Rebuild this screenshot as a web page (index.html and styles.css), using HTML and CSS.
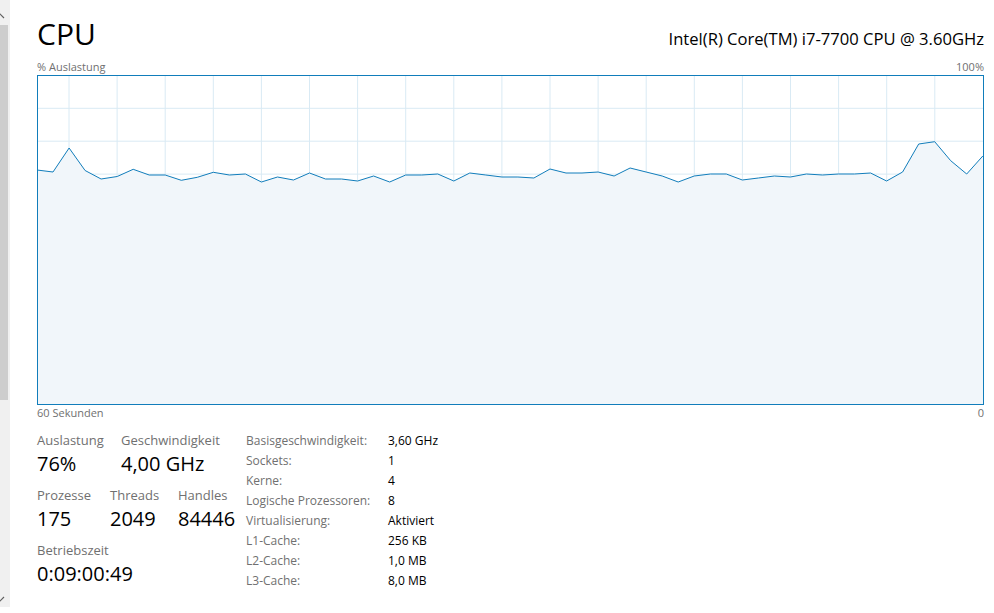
FILE: index.html
```html
<!DOCTYPE html>
<html lang="de">
  <head>
    <meta charset="utf-8">
    <title>CPU</title>
    <link rel="stylesheet" href="styles.css">
  </head>
  <body>
    <div class="scrollbar">
      <div class="sb-arrow">
        <svg width="10" height="25" viewBox="0 0 10 25"><polyline points="-4,18 0,14 4,18" fill="none" stroke="#606060" stroke-width="1.2"/></svg>
      </div>
      <div class="sb-thumb"></div>
      <div class="sb-rest"></div>
      <div class="sb-arrow sb-arrow-down">
        <svg width="10" height="12" viewBox="0 0 10 12"><polyline points="-4,2 0,6 4,2" fill="none" stroke="#606060" stroke-width="1.2"/></svg>
      </div>
    </div>

    <div class="main">
      <div class="head">
        <div class="title">CPU</div>
        <div class="model">Intel(R) Core(TM) i7-7700 CPU @ 3.60GHz</div>
      </div>

      <div class="axis axis-top">
        <span>% Auslastung</span>
        <span>100%</span>
      </div>

      <div class="chart">
        <svg viewBox="0 0 945 328" preserveAspectRatio="none">
          <g class="grid">
            <line x1="31" y1="0" x2="31" y2="328"/>
            <line x1="79.1" y1="0" x2="79.1" y2="328"/>
            <line x1="127.2" y1="0" x2="127.2" y2="328"/>
            <line x1="175.3" y1="0" x2="175.3" y2="328"/>
            <line x1="223.4" y1="0" x2="223.4" y2="328"/>
            <line x1="271.5" y1="0" x2="271.5" y2="328"/>
            <line x1="319.6" y1="0" x2="319.6" y2="328"/>
            <line x1="367.7" y1="0" x2="367.7" y2="328"/>
            <line x1="415.8" y1="0" x2="415.8" y2="328"/>
            <line x1="463.9" y1="0" x2="463.9" y2="328"/>
            <line x1="512" y1="0" x2="512" y2="328"/>
            <line x1="560.1" y1="0" x2="560.1" y2="328"/>
            <line x1="608.2" y1="0" x2="608.2" y2="328"/>
            <line x1="656.3" y1="0" x2="656.3" y2="328"/>
            <line x1="704.4" y1="0" x2="704.4" y2="328"/>
            <line x1="752.5" y1="0" x2="752.5" y2="328"/>
            <line x1="800.6" y1="0" x2="800.6" y2="328"/>
            <line x1="848.7" y1="0" x2="848.7" y2="328"/>
            <line x1="896.8" y1="0" x2="896.8" y2="328"/>
            <line x1="0" y1="32.3" x2="945" y2="32.3"/>
            <line x1="0" y1="65.2" x2="945" y2="65.2"/>
            <line x1="0" y1="98.1" x2="945" y2="98.1"/>
            <line x1="0" y1="131" x2="945" y2="131"/>
            <line x1="0" y1="163.9" x2="945" y2="163.9"/>
            <line x1="0" y1="196.8" x2="945" y2="196.8"/>
            <line x1="0" y1="229.7" x2="945" y2="229.7"/>
            <line x1="0" y1="262.6" x2="945" y2="262.6"/>
            <line x1="0" y1="295.5" x2="945" y2="295.5"/>
          </g>
          <polygon class="area" points="-1,94 15,96 31.1,72 47.1,94.5 63.1,103 79.2,100.5 95.2,93.3 111.2,99 127.2,99 143.3,104.3 159.3,101.3 175.3,96.3 191.4,99 207.4,98 223.4,106 239.5,101 255.5,104 271.5,97 287.5,103 303.6,103 319.6,105 335.6,100 351.7,106 367.7,99 383.7,99 399.8,98 415.8,105 431.8,97 447.8,99 463.9,101 479.9,101 495.9,102 512,93 528,97 544,97 560.1,96 576.1,100 592.1,92 608.1,96 624.2,100 640.2,106 656.2,100 672.3,98 688.3,98 704.3,104 720.4,102 736.4,100 752.4,101 768.4,98 784.5,99 800.5,98 816.5,98 832.6,97 848.6,105 864.6,96 880.7,68 896.7,65.7 912.7,84.7 928.7,98 944.8,80 945,328 -1,328"/>
          <polyline class="line" points="-1,94 15,96 31.1,72 47.1,94.5 63.1,103 79.2,100.5 95.2,93.3 111.2,99 127.2,99 143.3,104.3 159.3,101.3 175.3,96.3 191.4,99 207.4,98 223.4,106 239.5,101 255.5,104 271.5,97 287.5,103 303.6,103 319.6,105 335.6,100 351.7,106 367.7,99 383.7,99 399.8,98 415.8,105 431.8,97 447.8,99 463.9,101 479.9,101 495.9,102 512,93 528,97 544,97 560.1,96 576.1,100 592.1,92 608.1,96 624.2,100 640.2,106 656.2,100 672.3,98 688.3,98 704.3,104 720.4,102 736.4,100 752.4,101 768.4,98 784.5,99 800.5,98 816.5,98 832.6,97 848.6,105 864.6,96 880.7,68 896.7,65.7 912.7,84.7 928.7,98 944.8,80"/>
        </svg>
      </div>

      <div class="axis axis-bottom">
        <span>60 Sekunden</span>
        <span>0</span>
      </div>

      <div class="stats">
        <div class="stats-left">
          <div class="stat-row">
            <div class="stat stat-util">
              <div class="stat-label">Auslastung</div>
              <div class="stat-value">76%</div>
            </div>
            <div class="stat">
              <div class="stat-label">Geschwindigkeit</div>
              <div class="stat-value">4,00 GHz</div>
            </div>
          </div>
          <div class="stat-row">
            <div class="stat stat-proc">
              <div class="stat-label">Prozesse</div>
              <div class="stat-value">175</div>
            </div>
            <div class="stat stat-threads">
              <div class="stat-label">Threads</div>
              <div class="stat-value">2049</div>
            </div>
            <div class="stat">
              <div class="stat-label">Handles</div>
              <div class="stat-value">84446</div>
            </div>
          </div>
          <div class="stat-row">
            <div class="stat">
              <div class="stat-label">Betriebszeit</div>
              <div class="stat-value">0:09:00:49</div>
            </div>
          </div>
        </div>

        <div class="props">
          <div class="prop-label">Basisgeschwindigkeit:</div><div class="prop-value">3,60 GHz</div>
          <div class="prop-label">Sockets:</div><div class="prop-value">1</div>
          <div class="prop-label">Kerne:</div><div class="prop-value">4</div>
          <div class="prop-label">Logische Prozessoren:</div><div class="prop-value">8</div>
          <div class="prop-label">Virtualisierung:</div><div class="prop-value">Aktiviert</div>
          <div class="prop-label">L1-Cache:</div><div class="prop-value">256 KB</div>
          <div class="prop-label">L2-Cache:</div><div class="prop-value">1,0 MB</div>
          <div class="prop-label">L3-Cache:</div><div class="prop-value">8,0 MB</div>
        </div>
      </div>
    </div>
  </body>
</html>
```

FILE: styles.css
```css
html,body,div{
  margin:0;
  padding:0;
}
body{
  display:flex;
  align-items:flex-start;
  background:#fff;
  color:#000;
  font-family:"Open Sans","Noto Sans",sans-serif;
  overflow:hidden;
}

/* linke Scrollleiste */
.scrollbar{
  display:flex;
  flex-direction:column;
  width:10px;
  height:607px;
  background:#f0f0f0;
}
.sb-arrow{
  height:25px;
}
.sb-arrow svg{
  display:block;
}
.sb-arrow-down{
  height:12px;
}
.sb-thumb{
  width:8px;
  height:375px;
  background:#cdcdcd;
}
.sb-rest{
  flex:1;
}

.main{
  flex:1;
  padding:14px 10px 0 27px;
}
.head{
  display:flex;
  justify-content:space-between;
  align-items:baseline;
}
.title{
  font-size:30px;
  line-height:40px;
}
.model{
  font-size:16.6px;
}

.axis{
  display:flex;
  justify-content:space-between;
  font-size:11px;
  line-height:15px;
  color:#707070;
}
.axis-top{
  margin:5px 0 1px;
}

.chart{
  height:328px;
  border:1px solid #117dbb;
}
.chart svg{
  display:block;
  width:100%;
  height:100%;
}
.grid line{
  stroke:#d9eaf4;
  stroke-width:1;
}
.area{
  fill:#f1f6fa;
}
.line{
  fill:none;
  stroke:#117dbb;
  stroke-width:1;
}

.stats{
  display:flex;
  margin-top:11px;
}
.stats-left{
  width:209px;
}
.stat-row{
  display:flex;
  margin-bottom:8px;
}
.stat-util{
  width:84px;
}
.stat-proc{
  width:73px;
}
.stat-threads{
  width:68px;
}
.stat-label{
  font-size:13px;
  line-height:18px;
  color:#707070;
}
.stat-value{
  font-size:20px;
  line-height:29px;
}

.props{
  display:grid;
  grid-template-columns:142px auto;
  grid-auto-rows:20px;
  font-size:12px;
  line-height:20px;
}
.prop-label{
  color:#707070;
}
```
